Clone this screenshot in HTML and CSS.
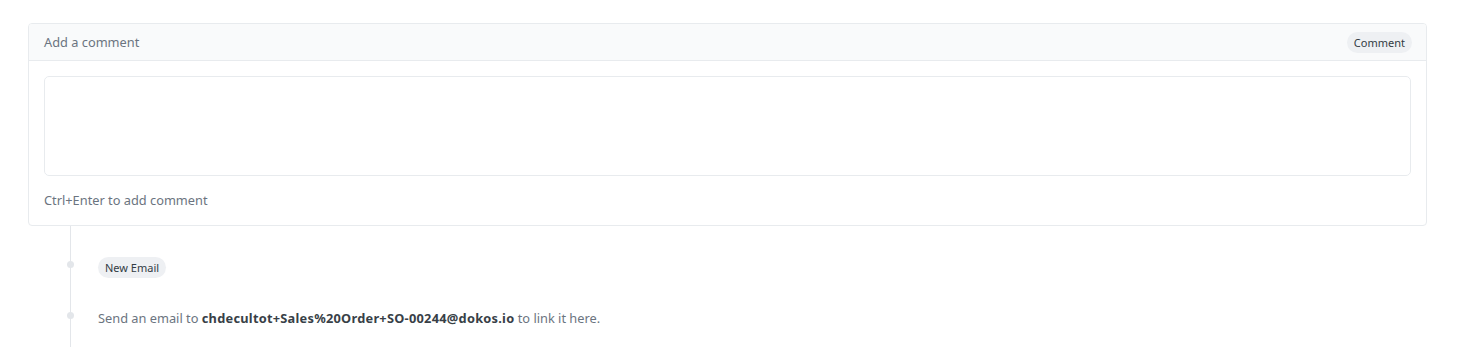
FILE: index.html
```html
<!DOCTYPE html>
<html lang="en">
<head>
    <meta charset="UTF-8">
    <meta name="viewport" content="width=device-width, initial-scale=1.0">
    <title>Comments</title>
    <link rel="stylesheet" href="styles.css">
</head>
<body>
    <div class="page">
        <div class="comment-box">
            <div class="comment-header">
                <span class="comment-title">Add a comment</span>
                <button class="pill-btn">Comment</button>
            </div>
            <div class="comment-body">
                <div class="comment-input"></div>
                <div class="comment-hint">Ctrl+Enter to add comment</div>
            </div>
        </div>
        <div class="timeline">
            <div class="timeline-item">
                <span class="dot"></span>
                <button class="pill-btn">New Email</button>
            </div>
            <div class="timeline-item">
                <span class="dot"></span>
                <span class="timeline-text">Send an email to <b>chdecultot+Sales%20Order+SO-00244@dokos.io</b> to link it here.</span>
            </div>
        </div>
    </div>
</body>
</html>
```

FILE: styles.css
```css
body {
    margin: 0;
    font-family: "Noto Sans", Arial, sans-serif;
    background: white;
    color: #525c66;
    overflow: hidden;
}
.page {
    padding: 23px 44px 0 28px;
}
.comment-box {
    border: 1px solid #e8ebee;
    border-radius: 4px;
    overflow: hidden;
}
.comment-header {
    background: #f9fafb;
    border-bottom: 1px solid #e8ebee;
    height: 36px;
    padding: 0 14px 0 15px;
    display: flex;
    align-items: center;
    justify-content: space-between;
}
.comment-title {
    font-size: 12.8px;
    color: #6b7480;
}
.pill-btn {
    font-family: inherit;
    font-size: 11px;
    color: #333c44;
    background: #eef0f3;
    border: none;
    border-radius: 11px;
    padding: 0 7px;
    height: 21px;
    line-height: 21px;
}
.comment-body {
    padding: 15px 15px 16px 15px;
}
.comment-input {
    height: 98px;
    border: 1px solid #e8ebee;
    border-radius: 5px;
}
.comment-hint {
    font-size: 12.8px;
    line-height: 18px;
    color: #6b7480;
    margin-top: 15px;
}
.timeline {
    margin-left: 42px;
    border-left: 1px solid #e3e6ea;
    padding-top: 31px;
    height: 200px;
}
.timeline-item {
    display: flex;
    align-items: flex-start;
    position: relative;
    padding-left: 27px;
    margin-bottom: 30px;
}
.dot {
    position: absolute;
    left: -4px;
    top: 4px;
    width: 7px;
    height: 7px;
    border-radius: 50%;
    background: #e3e6ea;
}
.timeline-text {
    font-size: 12.8px;
    line-height: 20px;
    color: #6b7480;
}
.timeline-text b {
    color: #383f47;
    font-weight: 700;
    letter-spacing: 0.25px;
}
```
